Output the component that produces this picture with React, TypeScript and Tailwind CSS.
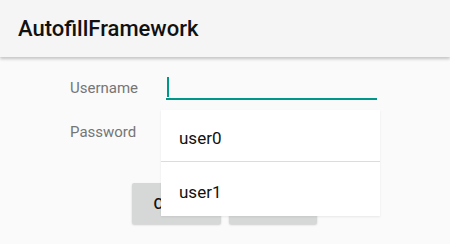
import React from "react";

export default function App() {
  return (
    <div
      className="relative w-[450px] h-[244px] overflow-hidden bg-[#fafafa]"
      style={{ fontFamily: "Roboto, 'Noto Sans', sans-serif" }}
    >
      <div className="relative z-10 h-[57px] bg-[#f5f5f5] pl-[18px] pt-[17px] shadow-[0_2px_3px_rgba(0,0,0,0.22)]">
        <div className="text-[22px] leading-[24px] font-medium text-[#111]">AutofillFramework</div>
      </div>

      <div className="flex flex-col">
        <div className="flex items-start mt-[20px] h-[46px]">
          <div className="ml-[70px] w-[96px] mt-[1px] text-[15px] leading-[20px] text-[#757575]">Username</div>
          <div className="flex flex-col w-[211px]">
            <div className="h-[21px] ml-px">
              <div className="w-[2px] h-[20px] bg-[#009688]" />
            </div>
            <div className="h-[2px] w-[211px] bg-[#009688]" />
          </div>
        </div>
        <div className="flex items-start h-[60px]">
          <div className="ml-[70px] mt-[-1px] text-[15px] leading-[20px] text-[#757575]">Password</div>
        </div>
        <div className="flex gap-[8px] ml-[132px]">
          <button className="w-[89px] h-[41px] rounded-[2px] bg-[#d6d7d7] text-[15px] leading-[20px] font-medium text-[#111] shadow-[0_1px_2px_rgba(0,0,0,0.18)]">
            CLEAR
          </button>
          <button className="w-[88px] h-[41px] rounded-[2px] bg-[#d6d7d7] text-[15px] leading-[20px] font-medium text-[#111] shadow-[0_1px_2px_rgba(0,0,0,0.18)]">
            LOGIN
          </button>
        </div>
      </div>

      <div className="absolute left-[161px] top-[110px] w-[219px] z-20 bg-white flex flex-col shadow-[0_1px_2px_rgba(0,0,0,0.08)]">
        <div className="h-[52px] pt-[16px] pl-[18px] text-[17px] leading-[24px] text-[#111] border-b border-[#dcdcdc]">user0</div>
        <div className="h-[54px] pt-[18px] pl-[18px] text-[17px] leading-[24px] text-[#111]">user1</div>
      </div>
    </div>
  );
}
